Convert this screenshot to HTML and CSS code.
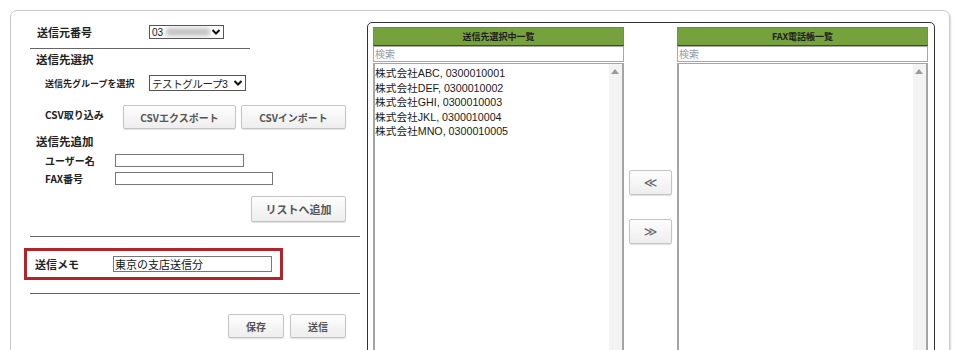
FILE: index.html
```html
<!DOCTYPE html>
<html lang="ja">
<head>
<meta charset="utf-8">
<title>FAX送信</title>
<link rel="stylesheet" href="styles.css">
</head>
<body>
<div class="frame">
  <div class="left">
    <div class="row row-from">
      <span class="lbl lbl-main">送信元番号</span>
      <div class="sel sel-from"><span class="sel-text">03</span><span class="blur"></span><svg class="chev" viewBox="0 0 10 8"><path d="M1.5 2 L5 5.5 L8.5 2" fill="none" stroke="#111" stroke-width="2"/></svg></div>
    </div>
    <hr class="div div-short">
    <div class="heading h-select">送信先選択</div>
    <div class="row row-group">
      <span class="lbl lbl-small">送信先グループを選択</span>
      <div class="sel sel-group"><span class="sel-text">テストグループ3</span><svg class="chev" viewBox="0 0 10 8"><path d="M1.5 2 L5 5.5 L8.5 2" fill="none" stroke="#111" stroke-width="2"/></svg></div>
    </div>
    <div class="row row-csv">
      <span class="lbl lbl-csv">CSV取り込み</span>
      <button class="btn btn-export">CSVエクスポート</button>
      <button class="btn btn-import">CSVインポート</button>
    </div>
    <div class="heading h-add">送信先追加</div>
    <div class="row row-user">
      <span class="lbl lbl-field">ユーザー名</span>
      <div class="inp inp-user"></div>
    </div>
    <div class="row row-fax">
      <span class="lbl lbl-field">FAX番号</span>
      <div class="inp inp-fax"></div>
    </div>
    <div class="row row-addbtn">
      <button class="btn btn-add">リストへ追加</button>
    </div>
    <hr class="div div-long div-2">
    <div class="memo">
      <span class="lbl lbl-memo">送信メモ</span>
      <div class="inp inp-memo">東京の支店送信分</div>
    </div>
    <hr class="div div-long div-3">
    <div class="row row-actions">
      <button class="btn btn-save">保存</button>
      <button class="btn btn-send">送信</button>
    </div>
  </div>
  <div class="right">
    <div class="list-col">
      <div class="list-head">送信先選択中一覧</div>
      <div class="search">検索</div>
      <div class="listbox">
        <div class="items">
          <div class="item">株式会社ABC, 0300010001</div>
          <div class="item">株式会社DEF, 0300010002</div>
          <div class="item">株式会社GHI, 0300010003</div>
          <div class="item">株式会社JKL, 0300010004</div>
          <div class="item">株式会社MNO, 0300010005</div>
        </div>
        <div class="scroll"><span class="tri"></span></div>
      </div>
    </div>
    <div class="mid">
      <button class="btn btn-move btn-left">≪</button>
      <button class="btn btn-move btn-right">≫</button>
    </div>
    <div class="list-col">
      <div class="list-head">FAX電話帳一覧</div>
      <div class="search">検索</div>
      <div class="listbox">
        <div class="items"></div>
        <div class="scroll"><span class="tri"></span></div>
      </div>
    </div>
  </div>
</div>
</body>
</html>
```
FILE: styles.css
```css
html, body {
  margin: 0;
  padding: 0;
  height: 350px;
  overflow: hidden;
  background: #fff;
}
body {
  font-family: "Liberation Sans", "Noto Sans CJK JP", sans-serif;
  color: #222;
}
.frame {
  margin: 10px 0 0 10px;
  width: 940px;
  height: 400px;
  border: 1px solid #c9c9c9;
  border-radius: 7px;
  box-shadow: 1px 1px 2px rgba(0,0,0,0.15);
  display: flex;
  box-sizing: border-box;
}
.left {
  width: 356px;
  padding: 14px 0 0 19px;
  box-sizing: border-box;
  flex: none;
}
.row {
  display: flex;
  align-items: center;
}
.lbl {
  font-weight: bold;
  color: #222;
  font-family: "Noto Sans CJK JP", sans-serif;
  white-space: nowrap;
}
.lbl-main {
  font-size: 11px;
  padding-left: 7px;
  box-sizing: border-box;
  width: 119px;
}
.row-from { height: 14px; }
.sel {
  border: 1px solid #555;
  background: #fff;
  display: flex;
  align-items: center;
  box-sizing: border-box;
  position: relative;
  font-family: "Liberation Sans", "Noto Sans CJK JP", sans-serif;
  color: #111;
  white-space: nowrap;
  overflow: hidden;
}
.sel-from {
  width: 75px;
  height: 14px;
  font-size: 10px;
  padding-left: 2px;
}
.blur {
  display: inline-block;
  width: 44px;
  height: 8px;
  margin-left: 3px;
  background: #c4c4c4;
  filter: blur(2px);
}
.chev {
  width: 10px;
  height: 8px;
  position: absolute;
  right: 2px;
  top: 50%;
  margin-top: -4px;
  background: #fff;
}
.div {
  border: none;
  border-top: 1px solid #666;
  margin: 0;
  height: 0;
}
.div-short {
  width: 220px;
  margin-top: 9px;
}
.heading {
  font-size: 11.5px;
  font-weight: bold;
  line-height: 14px;
  padding-left: 6px;
  font-family: "Noto Sans CJK JP", sans-serif;
  color: #222;
}
.h-select { margin-top: 3px; }
.row-group { margin-top: 9px; height: 16px; }
.lbl-small {
  font-size: 9px;
  padding-left: 15px;
  width: 119px;
  box-sizing: border-box;
}
.sel-group {
  width: 97px;
  height: 16px;
  font-size: 10.5px;
  padding-left: 2px;
  color: #222;
  letter-spacing: -0.4px;
}
.row-csv { margin-top: 14px; height: 24px; }
.lbl-csv {
  font-size: 10px;
  padding-left: 15px;
  width: 93px;
  box-sizing: border-box;
  align-self: flex-start;
  line-height: 20px;
}
.btn {
  font-family: "Noto Sans CJK JP", sans-serif;
  font-weight: bold;
  font-size: 10px;
  color: #555;
  background: linear-gradient(#fdfdfd, #eeeeee);
  border: 1px solid #c4c4c4;
  border-radius: 2px;
  box-shadow: 0 1px 1px rgba(0,0,0,0.12);
  padding: 0;
  margin: 0;
  box-sizing: border-box;
}
.btn-export { width: 113px; height: 24px; }
.btn-import { width: 105px; height: 24px; margin-left: 5px; }
.h-add { margin-top: 5px; }
.row-user { margin-top: 6px; height: 13px; }
.row-fax { margin-top: 5px; height: 13px; }
.lbl-field {
  font-size: 10px;
  padding-left: 15px;
  width: 85px;
  box-sizing: border-box;
}
.inp {
  border: 1px solid #777;
  background: #fff;
  box-sizing: border-box;
}
.inp-user { width: 129px; height: 13px; }
.inp-fax { width: 158px; height: 13px; }
.row-addbtn {
  margin-top: 11px;
  width: 316px;
  justify-content: flex-end;
}
.btn-add { width: 95px; height: 26px; font-size: 11px; }
.div-long { width: 330px; }
.div-2 { margin-top: 14px; }
.memo {
  margin: 11px 0 0 -6px;
  width: 259px;
  height: 32px;
  border: 3px solid #b0242a;
  box-sizing: border-box;
  display: flex;
  align-items: center;
}
.lbl-memo {
  font-size: 11px;
  padding-left: 8px;
  width: 86px;
  box-sizing: border-box;
}
.inp-memo {
  width: 159px;
  height: 16px;
  font-size: 11px;
  line-height: 14px;
  padding-left: 1px;
  color: #111;
  font-family: "Noto Sans CJK JP", sans-serif;
}
.div-3 { margin-top: 13px; }
.row-actions {
  margin-top: 20px;
  width: 316px;
  justify-content: flex-end;
  gap: 6px;
}
.btn-save, .btn-send { width: 56px; height: 24px; }
.right {
  margin-top: 11px;
  width: 568px;
  height: 380px;
  border: 1.5px solid #333;
  border-radius: 5px;
  box-sizing: border-box;
  padding: 4px 6px 0 5px;
  display: flex;
  flex: none;
}
.list-col {
  width: 251px;
  display: flex;
  flex-direction: column;
}
.list-head {
  height: 19px;
  background: #76a23e;
  border: 1px solid #6a9436;
  border-bottom: 1px solid #444;
  box-sizing: border-box;
  font-size: 9px;
  font-weight: bold;
  text-align: center;
  line-height: 17px;
  color: #1c1c1c;
  font-family: "Noto Sans CJK JP", sans-serif;
}
.search {
  height: 16px;
  border: 1px solid #a8a8a8;
  box-sizing: border-box;
  font-size: 10px;
  line-height: 13px;
  color: #999;
  padding-left: 1px;
  font-family: "Noto Sans CJK JP", sans-serif;
}
.listbox {
  flex: 1;
  border: 2px solid #a5a5a5;
  border-top-width: 1px;
  display: flex;
  margin-top: 1px;
}
.items {
  flex: 1;
  padding-top: 2px;
}
.item {
  font-size: 10.7px;
  line-height: 14.6px;
  color: #1a1a1a;
  padding-left: 0;
  white-space: nowrap;
}
.scroll {
  width: 13px;
  background: #f3f3f3;
  position: relative;
}
.tri {
  position: absolute;
  left: 2px;
  top: 5px;
  width: 0;
  height: 0;
  border-left: 4px solid transparent;
  border-right: 4px solid transparent;
  border-bottom: 5px solid #9a9a9a;
}
.mid {
  width: 53px;
  display: flex;
  flex-direction: column;
  align-items: center;
  flex: none;
}
.btn-move {
  width: 43px;
  height: 25px;
  font-size: 13px;
  font-weight: normal;
  color: #666;
  font-family: "DejaVu Sans", sans-serif;
}
.btn-left { margin-top: 143px; }
.btn-right { margin-top: 24px; }
```
